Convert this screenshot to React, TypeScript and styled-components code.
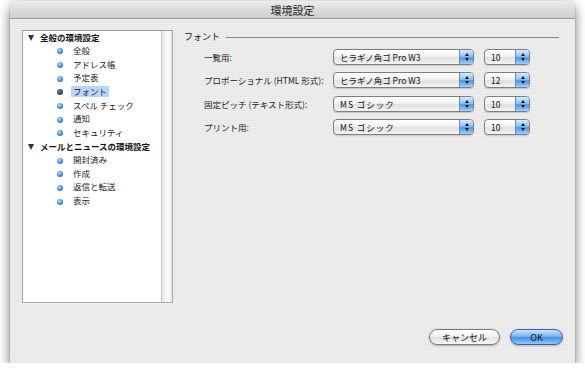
import styled, { createGlobalStyle } from 'styled-components';

const GlobalStyle = createGlobalStyle`
  html, body {
    margin: 0;
    padding: 0;
    background: #ffffff;
  }
  body {
    font-family: 'Noto Sans CJK JP', 'Liberation Sans', sans-serif;
    color: #111;
  }
`;

const Window = styled.div`
  box-sizing: border-box;
  width: 565px;
  height: 362px;
  margin: 1px 0 0 10px;
  border-radius: 5px 5px 0 0;
  display: flex;
  flex-direction: column;
  box-shadow: 0 6px 12px rgba(0, 0, 0, 0.55), 0 0 1px rgba(0, 0, 0, 0.5);
  background: repeating-linear-gradient(
    to bottom,
    #efefef 0px,
    #efefef 1px,
    #e6e6e6 1px,
    #e6e6e6 2px
  );
  overflow: hidden;
`;

const TitleBar = styled.div`
  height: 17px;
  flex-shrink: 0;
  display: flex;
  align-items: center;
  justify-content: center;
  font-size: 11px;
  color: #222;
  background: linear-gradient(to bottom, #ececec 0%, #dcdcdc 50%, #cfcfcf 100%);
  border-bottom: 1px solid #9a9a9a;
`;

const Body = styled.div`
  flex: 1;
  display: flex;
  flex-direction: column;
  padding: 11px 12px 17px 12px;
`;

const Main = styled.div`
  flex: 1;
  display: flex;
  gap: 11px;
`;

const ListBox = styled.div`
  box-sizing: border-box;
  width: 151px;
  height: 273px;
  display: flex;
  background: #fff;
  border: 1px solid #a8a8a8;
  border-top-color: #9a9a9a;
`;

const Tree = styled.div`
  flex: 1;
  padding-top: 0;
  font-size: 8.5px;
`;

const Scroll = styled.div`
  width: 10px;
  background: linear-gradient(to right, #e4e4e4 0%, #f7f7f7 40%, #fbfbfb 70%, #e6e6e6 100%);
  border-left: 1px solid #c8c8c8;
`;

const Row = styled.div<{ $indent?: boolean }>`
  height: 13.65px;
  display: flex;
  align-items: center;
  line-height: 10px;
  padding-left: ${({ $indent }) => ($indent ? '34px' : '5px')};
  white-space: nowrap;
`;

const GroupText = styled.span`
  font-weight: bold;
  color: #111;
  margin-left: 6px;
  margin-top: -2px;
`;

const Triangle = styled.span`
  width: 0;
  height: 0;
  border-left: 3.5px solid transparent;
  border-right: 3.5px solid transparent;
  border-top: 6px solid #333;
`;

const Bullet = styled.span<{ $dark?: boolean }>`
  width: 6px;
  height: 6px;
  border-radius: 50%;
  background: ${({ $dark }) =>
    $dark
      ? 'radial-gradient(circle at 40% 35%, #6f84a8 0%, #2c3d63 60%, #1a2745 100%)'
      : 'radial-gradient(circle at 40% 35%, #bfe0ff 0%, #3f86e6 55%, #1a4fa8 100%)'};
`;

const ItemText = styled.span<{ $selected?: boolean }>`
  margin-left: 8px;
  margin-top: -2px;
  padding: 0 2px;
  color: #222;
  line-height: 11px;
  background: ${({ $selected }) => ($selected ? '#b6d6fd' : 'transparent')};
`;

const Panel = styled.div`
  flex: 1;
  display: flex;
  flex-direction: column;
`;

const GroupHead = styled.div`
  display: flex;
  align-items: center;
  font-size: 9px;
  height: 12px;
`;

const HeadLine = styled.div`
  flex: 1;
  height: 1px;
  background: #8c8c8c;
  margin: 2px 4px 0 6px;
`;

const Form = styled.div`
  display: flex;
  flex-direction: column;
  gap: 7.4px;
  padding: 7px 0 0 20px;
`;

const FormRow = styled.div`
  display: flex;
  align-items: center;
  height: 16px;
`;

const Label = styled.div`
  width: 129px;
  font-size: 8.5px;
  color: #222;
  white-space: nowrap;
`;

const Popup = styled.div<{ $w: number }>`
  box-sizing: border-box;
  width: ${({ $w }) => $w}px;
  height: 16px;
  display: flex;
  align-items: center;
  border: 1px solid #7e7e7e;
  border-radius: 4px;
  background: linear-gradient(to bottom, #ffffff 0%, #f2f2f2 45%, #e0e0e0 55%, #f4f4f4 100%);
  overflow: hidden;
  box-shadow: 0 1px 1px rgba(0, 0, 0, 0.15);
  margin-right: 10px;
`;

const PopupText = styled.div<{ $wide?: boolean }>`
  flex: 1;
  font-size: 8.5px;
  padding-left: 6px;
  letter-spacing: ${({ $wide }) => ($wide ? '1px' : '0')};
  color: #111;
  white-space: nowrap;
`;

const Stepper = styled.div`
  width: 13px;
  height: 100%;
  display: flex;
  flex-direction: column;
  align-items: center;
  justify-content: center;
  gap: 2px;
  border-left: 1px solid #6c8ebf;
  background: linear-gradient(to bottom, #d6ebff 0%, #8ec2f5 45%, #4e98e8 55%, #9fd0ff 100%);
`;

const Arrow = styled.span<{ $up?: boolean }>`
  width: 0;
  height: 0;
  border-left: 2.5px solid transparent;
  border-right: 2.5px solid transparent;
  ${({ $up }) => ($up ? 'border-bottom: 3px solid #111;' : 'border-top: 3px solid #111;')}
`;

const Footer = styled.div`
  display: flex;
  justify-content: flex-end;
  gap: 10px;
  margin-bottom: 1px;
`;

const Button = styled.div<{ $primary?: boolean; $w: number }>`
  box-sizing: border-box;
  width: ${({ $w }) => $w}px;
  height: 16px;
  border-radius: 8px;
  display: flex;
  align-items: center;
  justify-content: center;
  font-size: 9px;
  color: #111;
  border: 1px solid ${({ $primary }) => ($primary ? '#3d62a3' : '#7a7a7a')};
  background: ${({ $primary }) =>
    $primary
      ? 'linear-gradient(to bottom, #c9e3ff 0%, #7ab5f1 45%, #4a91e6 55%, #8cc8ff 100%)'
      : 'linear-gradient(to bottom, #ffffff 0%, #f3f3f3 45%, #e2e2e2 55%, #f7f7f7 100%)'};
  box-shadow: 0 1px 2px rgba(0, 0, 0, 0.25);
`;

type Item = { label: string; selected?: boolean };

const groups: { title: string; items: Item[] }[] = [
  {
    title: '全般の環境設定',
    items: [
      { label: '全般' },
      { label: 'アドレス帳' },
      { label: '予定表' },
      { label: 'フォント', selected: true },
      { label: 'スペル チェック' },
      { label: '通知' },
      { label: 'セキュリティ' },
    ],
  },
  {
    title: 'メールとニュースの環境設定',
    items: [{ label: '開封済み' }, { label: '作成' }, { label: '返信と転送' }, { label: '表示' }],
  },
];

const fonts = [
  { label: '一覧用:', font: 'ヒラギノ角ゴ Pro W3', size: '10' },
  { label: 'プロポーショナル (HTML 形式):', font: 'ヒラギノ角ゴ Pro W3', size: '12' },
  { label: '固定ピッチ (テキスト形式):', font: 'MS ゴシック', size: '10', wide: true },
  { label: 'プリント用:', font: 'MS ゴシック', size: '10', wide: true },
];

function App() {
  return (
    <>
      <GlobalStyle />
      <Window>
        <TitleBar>環境設定</TitleBar>
        <Body>
          <Main>
            <ListBox>
              <Tree>
                {groups.map((g) => (
                  <div key={g.title}>
                    <Row>
                      <Triangle />
                      <GroupText>{g.title}</GroupText>
                    </Row>
                    {g.items.map((it) => (
                      <Row $indent key={it.label}>
                        <Bullet $dark={it.selected} />
                        <ItemText $selected={it.selected}>{it.label}</ItemText>
                      </Row>
                    ))}
                  </div>
                ))}
              </Tree>
              <Scroll />
            </ListBox>
            <Panel>
              <GroupHead>
                フォント
                <HeadLine />
              </GroupHead>
              <Form>
                {fonts.map((f) => (
                  <FormRow key={f.label}>
                    <Label>{f.label}</Label>
                    <Popup $w={141}>
                      <PopupText $wide={f.wide}>{f.font}</PopupText>
                      <Stepper>
                        <Arrow $up />
                        <Arrow />
                      </Stepper>
                    </Popup>
                    <Popup $w={46}>
                      <PopupText>{f.size}</PopupText>
                      <Stepper>
                        <Arrow $up />
                        <Arrow />
                      </Stepper>
                    </Popup>
                  </FormRow>
                ))}
              </Form>
            </Panel>
          </Main>
          <Footer>
            <Button $w={71}>キャンセル</Button>
            <Button $primary $w={53}>
              OK
            </Button>
          </Footer>
        </Body>
      </Window>
    </>
  );
}

export default App;
